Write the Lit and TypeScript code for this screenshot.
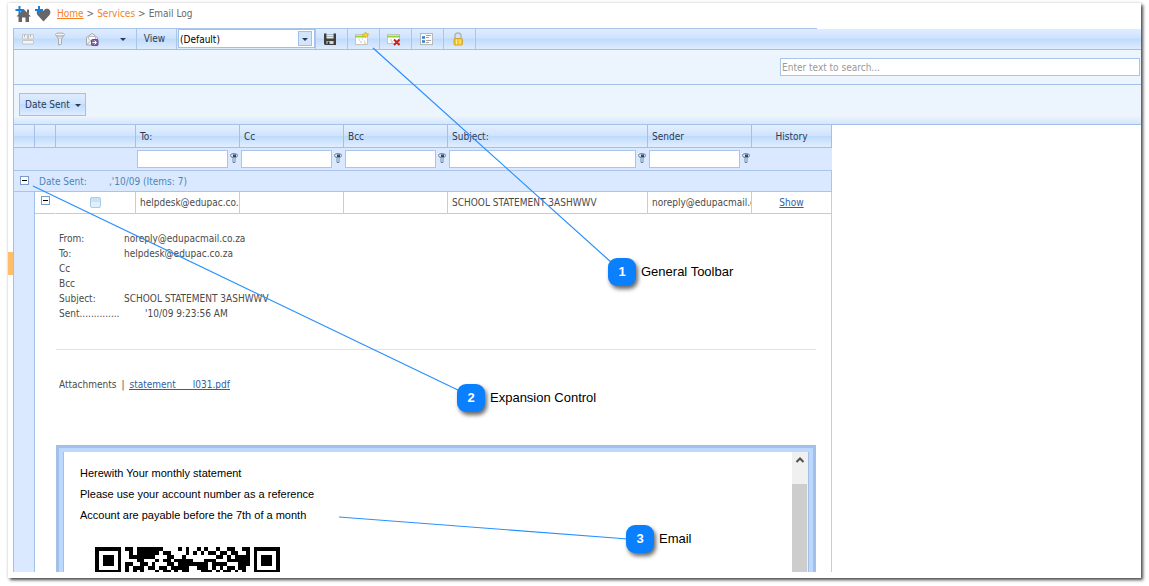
import { LitElement, html, svg, css } from "lit";
import { customElement, property } from "lit/decorators.js";

const glyphs: Record<string, unknown> = {
  home: svg`<path d="M8.500 3 16 10.500H14V16H10.500V11.500H7V16H3.500V10.500H1.500Z" fill="#666"/><path d="M12 3.500H14V8.500L12 6.500Z" fill="#666"/><path d="M4.500 0V8M.5 4H8.500" stroke="#1b7fd6" stroke-width="2"/>`,
  heart: svg`<path d="M8.500 15.500 2.500 9C.5 6 2.500 3 5 3 7 3 8 4 8.500 5 9.500 3 11 2.500 12.500 2.700 15 3 16.500 6 14.500 9Z" fill="#666"/><path d="M4 0V8M0 4H8" stroke="#1b7fd6" stroke-width="2"/>`,
  card: svg`<path d="M2.500 3.500H7.500V8H2.500ZM8.500 3.500H13.500V8H8.500Z" fill="#f1f1f1" stroke="#c4c8cd"/><path d="M4.500 4V6M10.500 4V6" stroke="#b2b7be"/><path d="M2.500 9.500H13.500V13H2.500Z" fill="#f5f5f5" stroke="#c4c8cd"/>`,
  funnel: svg`<path d="M3.500 3.500 6.500 8V14L9.500 13V8L12.500 3.500Z" fill="#d9dbdd" stroke="#a9adb2"/><ellipse cx="8" cy="3.500" rx="4.500" ry="1.500" fill="#f4f4f4" stroke="#a9adb2"/><path d="M8 8V13" stroke="#fff"/>`,
  mail: svg`<path d="M2.500 6.500 8 2.500 13.500 6.500V14H2.500Z" fill="#f3f3f3" stroke="#a5a8ac"/><path d="M4.500 5.500H11.500V8L8 10.500 4.500 8Z" fill="#fff" stroke="#b9bcc0"/><path d="M2.500 14 7 9.500" stroke="#a5a8ac"/><rect x="7.500" y="8.500" width="6.500" height="6" rx="1" fill="#8a5fb2" stroke="#6b4593"/><path d="M8.500 11.500H12M10.500 9.500 12.500 11.500 10.500 13.500" fill="none" stroke="#fff"/>`,
  save: svg`<path d="M2 2.500H14V14H3L2 13Z" fill="#3e3e3e"/><rect x="4.500" y="2" width="7" height="5.500" fill="#e2eef5"/><path d="M5 3.500H11M5 5.500H11" stroke="#a8b9c2"/><rect x="4.500" y="10" width="7" height="3" fill="#d7d7d7"/><rect x="5.500" y="10.500" width="2" height="2.500" fill="#333"/>`,
  add: svg`<rect x="1.500" y="3.500" width="12" height="10" fill="#fff" stroke="#c5c5bf"/><path d="M1 5.500H12" stroke="#8ed43a" stroke-width="2"/><path d="M5 9H6M8 8H9M10 10H11M6 11H8M10 12H12" stroke="#bbb"/><path d="M11.500 1 12.500 2.500 14.500 3 13.500 5 12 6.500 9.500 5.500 8.500 3.500 10.500 2.500Z" fill="#f5cf38" stroke="#d8a51c" stroke-width=".7"/>`,
  remove: svg`<rect x="1.500" y="3.500" width="12" height="9" fill="#fff" stroke="#c5c5bf"/><path d="M1 5.500H14" stroke="#8ed43a" stroke-width="2"/><path d="M4 9H6M5 11H7" stroke="#bbb"/><path d="M8 8.500 13.500 14M13.500 8.500 8 14" stroke="#c61f24" stroke-width="2"/>`,
  form: svg`<rect x="2.500" y="2.500" width="12" height="11" fill="#fafafa" stroke="#b5b8bc"/><path d="M4 6.500H7M4 10.500H7" stroke="#3880c4" stroke-width="2.500"/><path d="M8 4.500H13M8 6.500H11M8 9.500H13M8 11.500H11" stroke="#a5a5a5"/>`,
  lock: svg`<path d="M5 8V5A3 3 0 0 1 11 5V8" fill="none" stroke="#b5b5b0" stroke-width="1.500"/><rect x="4" y="7.500" width="8.500" height="6.500" rx="1" fill="#f1c72d" stroke="#c99b1d" stroke-width=".8"/><path d="M6.500 8.500V13.500M10 8.500V13.500" stroke="#fdeb89"/>`,
  arrow: svg`<path d="M5 7H11L8 10Z" fill="#283b56"/>`,
  pick: svg`<path d="M4.500 4 7 7.500V11.500H9V7.500L11.500 4Z" fill="#eef4fb" stroke="#6c84a6"/><ellipse cx="8" cy="4.500" rx="3.500" ry="2" fill="#dce8f6" stroke="#6c84a6"/><rect x="7" y="3.500" width="3" height="2.500" fill="#2c4b75"/>`,
  up: svg`<path d="M4.500 10 8 6.500 11.500 10" fill="none" stroke="#505050" stroke-width="2"/>`,
};

const icon = (name: string) =>
  html`<svg class="icon" width="16" height="16" viewBox="0 0 16 16" aria-hidden="true">${glyphs[name]}</svg>`;

@customElement("qr-strip")
class QrStrip extends LitElement {
  static styles = css`
    :host { display: block; }
    svg { display: block; }
  `;

  private finder = ["1111111", "1000001", "1011101", "1011101", "1011101", "1000001", "1111111"];

  private body = [
    "110111111100001010010100100110011",
    "010111111011000010101011011011001",
    "011111110001100100000000110101111",
    "000110001011011111000111000111111",
    "110011010001101111111101111000111",
    "101110110110111110011101010110110",
    "101010001011010110001110101101010",
  ];

  render() {
    const rows = this.body.map((bits, i) => `${this.finder[i]}0${bits}0${this.finder[i]}`);
    return html`<svg width="185" height="27" viewBox="0 0 49 7" preserveAspectRatio="none" role="img" aria-label="QR code" shape-rendering="crispEdges">
      ${rows.map((row, y) =>
        [...row.matchAll(/1+/g)].map((run) => svg`<rect x=${run.index} y=${y} width=${run[0].length} height="1"/>`)
      )}
    </svg>`;
  }
}

@customElement("call-out")
class CallOut extends LitElement {
  static styles = css`
    :host {
      position: absolute;
      display: flex;
      align-items: center;
      gap: 5px;
      font: 13px/30px "Liberation Sans", Arial, sans-serif;
      color: #000;
      white-space: nowrap;
    }
    .badge {
      width: 28px;
      height: 28px;
      border-radius: 9px;
      background: #0a80ff;
      color: #fff;
      font-weight: bold;
      line-height: 28px;
      text-align: center;
      box-shadow: 2px 3px 4px rgba(0, 0, 0, 0.6);
    }
  `;

  @property() number = "";
  @property() label = "";

  render() {
    return html`<span class="badge">${this.number}</span><span>${this.label}</span>`;
  }
}

@customElement("app-root")
class AppRoot extends LitElement {
  static styles = css`
    :host {
      display: block;
      position: relative;
      box-sizing: border-box;
      height: 100vh;
      padding: 3px 8px 8px;
      overflow: hidden;
      background: #fff;
      font: 10px/15px "DejaVu Sans Condensed", Tahoma, sans-serif;
      color: #4a4a4a;
    }
    * { box-sizing: border-box; }
    .icon { display: block; flex: none; }
    button, input, select { font: inherit; color: inherit; margin: 0; border-radius: 0; }
    .sheet {
      height: 100%;
      padding: 0 0 6px 5px;
      background: #fff;
      box-shadow: 2px 2px 3px rgba(0, 0, 0, 0.7), 0 0 3px rgba(0, 0, 0, 0.15);
      position: relative;
    }
    .marker {
      position: absolute;
      left: 0;
      top: 249px;
      width: 5px;
      height: 23px;
      background: #ffbe6a;
    }
    .page { height: 100%; overflow: hidden; }
    .crumbs {
      display: flex;
      align-items: center;
      gap: 4px;
      height: 26px;
      max-width: 804px;
      padding: 0 0 4px 2px;
      border-bottom: 1px solid #a9c5ec;
      color: #6a6a6a;
    }
    .crumbs a { color: #f5821f; text-decoration: none; }
    .crumbs a.home { text-decoration: underline; }
    .trail { display: flex; gap: 3px; margin-left: 2px; }
    .toolbar {
      display: flex;
      height: 21px;
      border-left: 1px solid #a3c0e8;
      border-bottom: 1px solid #a3c0e8;
      background: linear-gradient(#dfecff 0, #cfe3fd 45%, #bfdbfb 50%, #dfecff 100%);
      color: #283b56;
    }
    .toolbar button {
      display: flex;
      align-items: center;
      justify-content: center;
      width: 32px;
      padding: 0 4px 0 0;
      border: 0;
      border-right: 1px solid #a9c5ec;
      background: none;
    }
    .toolbar .plain { border: 0; }
    .toolbar .drop { width: 27px; padding: 0; border-right: 1px solid #a9c5ec; }
    .toolbar label {
      width: 40px;
      line-height: 20px;
      text-align: center;
      border-right: 1px solid #a9c5ec;
      padding-right: 4px;
    }
    .combo {
      position: relative;
      width: 139px;
      padding: 0 1px;
      border-right: 1px solid #a9c5ec;
    }
    .combo select {
      display: block;
      width: 137px;
      height: 19px;
      padding: 2px 1px 0;
      border: 1px solid #a3c0e8;
      background: #fff;
      appearance: none;
      color: #000;
    }
    .knob {
      position: absolute;
      right: 3px;
      top: 2px;
      display: flex;
      align-items: center;
      justify-content: center;
      width: 14px;
      height: 15px;
      border: 1px solid #a3c0e8;
      background: #d3e5fc;
      pointer-events: none;
    }
    .search {
      display: flex;
      justify-content: flex-end;
      height: 35px;
      padding: 8px 1px 8px 8px;
      border-left: 1px solid #a3c0e8;
      border-bottom: 1px solid #a3c0e8;
      background: #ecf4fe;
    }
    .search input {
      flex: 0 1 360px;
      min-width: 0;
      padding: 0 1px;
      border: 1px solid #a9c5ec;
      background: #fff;
    }
    .search input::placeholder { color: #999; opacity: 1; }
    .grouping {
      height: 40px;
      padding: 8px 5px;
      border-left: 1px solid #a3c0e8;
      border-bottom: 1px solid #a3c0e8;
      background: linear-gradient(#ecf4fe 0, #ecf4fe 80%, #d5e6fa 100%);
    }
    .grouping button {
      display: flex;
      align-items: center;
      justify-content: space-between;
      width: 67px;
      height: 23px;
      padding: 0 0 0 5px;
      border: 1px solid #a3c0e8;
      background: linear-gradient(#dfecff 0, #cfe3fd 45%, #bfdbfb 50%, #dfecff 100%);
      color: #283b56;
      white-space: nowrap;
    }
    table {
      width: 819px;
      table-layout: fixed;
      border-collapse: separate;
      border-spacing: 0;
      border-left: 1px solid #a3c0e8;
    }
    th, td { padding: 0; text-align: left; font-weight: normal; overflow: hidden; white-space: nowrap; }
    .c21 { width: 21px; }
    .c80 { width: 80px; }
    .c104 { width: 104px; }
    .c200 { width: 200px; }
    th {
      height: 23px;
      padding: 0 4px;
      border-right: 1px solid #a3c0e8;
      border-bottom: 1px solid #a3c0e8;
      background: linear-gradient(#e5f0ff 0, #cfe3fd 48%, #bfdbfb 52%, #e1eeff 100%);
      color: #283b56;
    }
    .center { text-align: center; }
    .filters td { height: 23px; background: #dae9ff; border-bottom: 1px solid #a9c5ec; }
    .filter { display: flex; align-items: center; padding-left: 1px; }
    .filter input {
      flex: 1;
      min-width: 0;
      height: 18px;
      padding: 0 2px;
      border: 1px solid #a9c5ec;
      background: #fff;
    }
    .filter button {
      display: flex;
      align-items: center;
      justify-content: center;
      width: 12px;
      height: 16px;
      padding: 0;
      border: 0;
      background: none;
    }
    .group td { height: 21px; background: #dae9ff; border-bottom: 1px solid #a9c5ec; border-right: 1px solid #a9c5ec; color: #4a86b8; }
    .group .line { display: flex; align-items: center; }
    .toggle {
      flex: none;
      display: block;
      width: 9px;
      height: 9px;
      padding: 3px 1px;
      border: 1px solid #7a9cc8;
      background: #fff;
    }
    .toggle::before { content: ""; display: block; height: 1px; background: #000; }
    .group .toggle { margin: 0 10px 2px 6px; }
    .group .title { width: 70px; }
    .row td { height: 22px; padding: 0 0 0 4px; border-right: 1px solid #b9d0f0; border-bottom: 1px solid #b5cdee; }
    .row td.rail, .detail td.rail { background: #dae9ff; border-bottom: 0; border-right: 1px solid #a3c0e8; padding: 0; }
    .row td.bare { border-right-color: transparent; padding: 0 0 4px 6px; }
    .row td.tick { padding: 0 0 0 34px; }
    .row td.center { padding: 0; }
    .row input {
      appearance: none;
      display: block;
      width: 11px;
      height: 11px;
      border: 1px solid #a7cbea;
      border-radius: 2px;
      background: linear-gradient(#c9e2f6 50%, #e0effb 50%);
    }
    a { color: #2f5fa5; }
    .detail td { border-right: 1px solid #b9d0f0; vertical-align: top; padding: 17px 15px 0 21px; }
    dl {
      display: grid;
      grid-template-columns: 65px 1fr;
      grid-auto-rows: 15px;
      margin: 0 3px;
    }
    dd { margin: 0; }
    .sent { padding-left: 21px; }
    .rule { margin: 28px 0 0; border: 0; border-top: 1px solid #e2e2e2; }
    .files { display: flex; gap: 5px; margin: 27px 3px 53px; }
    .files a { display: flex; gap: 17px; height: 13px; text-decoration: none; border-bottom: 1px solid #2f5fa5; }
    .mail {
      display: flex;
      justify-content: space-between;
      height: 300px;
      border: 3px solid #a3c0e8;
      outline: 4px solid #bcd8ff;
      outline-offset: -7px;
      padding: 3px 4px 0;
    }
    .letter {
      flex: 1;
      padding: 8px 16px;
      border: 1px solid #a3c0e8;
      border-right: 0;
      font: 11px/15px "Liberation Sans", Arial, sans-serif;
      color: #000;
    }
    .letter p { margin: 6px 0; }
    .letter qr-strip { margin: 24px 0 0 15px; }
    .scroll { width: 17px; border: 1px solid #a3c0e8; border-left: 0; background: #f0f0f0; }
    .scroll .thumb { width: 15px; height: 250px; margin-top: 16px; background: #cdcdcd; }
    .wires { position: absolute; left: 0; top: 0; pointer-events: none; }
    .one { left: 608px; top: 257px; }
    .two { left: 457px; top: 383px; }
    .three { left: 626px; top: 524px; }
  `;

  private filterCell(name: string) {
    return html`<td><div class="filter"><input aria-label="Filter ${name}" /><button aria-label="${name} filter options">${icon("pick")}</button></div></td>`;
  }

  render() {
    return html`
      <main class="sheet">
        <span class="marker"></span>
        <div class="page">
          <nav class="crumbs">
            <a href="#" aria-label="Set as home">${icon("home")}</a>
            <a href="#" aria-label="Add to favourites">${icon("heart")}</a>
            <div class="trail">
              <a class="home" href="#">Home</a><span>&gt;</span><a href="#">Services</a><span>&gt;</span><span>Email Log</span>
            </div>
          </nav>
          <div class="toolbar">
            <button class="plain" aria-label="Card view">${icon("card")}</button>
            <button class="plain" aria-label="Filter">${icon("funnel")}</button>
            <button class="plain" aria-label="Send">${icon("mail")}</button>
            <button class="drop" aria-label="More">${icon("arrow")}</button>
            <label for="view">View</label>
            <div class="combo">
              <select id="view"><option>(Default)</option></select>
              <span class="knob">${icon("arrow")}</span>
            </div>
            ${["save", "add", "remove", "form", "lock"].map((n) => html`<button aria-label=${n}>${icon(n)}</button>`)}
          </div>
          <div class="search"><input aria-label="Search" placeholder="Enter text to search..." /></div>
          <div class="grouping"><button>Date Sent ${icon("arrow")}</button></div>
          <table>
            <colgroup>
              <col class="c21" /><col class="c21" /><col class="c80" /><col class="c104" /><col class="c104" />
              <col class="c104" /><col class="c200" /><col class="c104" /><col class="c80" />
            </colgroup>
            <thead>
              <tr><th></th><th></th><th></th><th>To:</th><th>Cc</th><th>Bcc</th><th>Subject:</th><th>Sender</th><th class="center">History</th></tr>
            </thead>
            <tbody>
              <tr class="filters">
                <td></td><td></td><td></td>
                ${["To", "Cc", "Bcc", "Subject", "Sender"].map((n) => this.filterCell(n))}
                <td></td>
              </tr>
              <tr class="group">
                <td colspan="9"><div class="line"><button class="toggle" aria-label="Collapse group"></button><span class="title">Date Sent:</span><span>,'10/09 (Items: 7)</span></div></td>
              </tr>
              <tr class="row">
                <td class="rail"></td>
                <td class="bare"><button class="toggle" aria-label="Collapse row"></button></td>
                <td class="tick"><input type="checkbox" aria-label="Select row" /></td>
                <td>helpdesk@edupac.co.za</td><td></td><td></td>
                <td>SCHOOL STATEMENT 3ASHWWV</td><td>noreply@edupacmail.co.za</td>
                <td class="center"><a href="#">Show</a></td>
              </tr>
              <tr class="detail">
                <td class="rail"></td>
                <td colspan="8">
                  <dl>
                    <dt>From:</dt><dd>noreply@edupacmail.co.za</dd>
                    <dt>To:</dt><dd>helpdesk@edupac.co.za</dd>
                    <dt>Cc</dt><dd></dd>
                    <dt>Bcc</dt><dd></dd>
                    <dt>Subject:</dt><dd>SCHOOL STATEMENT 3ASHWWV</dd>
                    <dt>Sent..............</dt><dd class="sent">'10/09 9:23:56 AM</dd>
                  </dl>
                  <hr class="rule" />
                  <div class="files"><span>Attachments</span><span>|</span><a href="#"><span>statement</span><span>l031.pdf</span></a></div>
                  <div class="mail">
                    <div class="letter">
                      <p>Herewith Your monthly statement</p>
                      <p>Please use your account number as a reference</p>
                      <p>Account are payable before the 7th of a month</p>
                      <qr-strip></qr-strip>
                    </div>
                    <div class="scroll">${icon("up")}<div class="thumb"></div></div>
                  </div>
                </td>
              </tr>
            </tbody>
          </table>
        </div>
      </main>
      <svg class="wires" width="1149" height="586" aria-hidden="true">
        <path d="M373 48 612 263M33 186 460 391M339 517 628 539" fill="none" stroke="#2a90ff" stroke-width="1.200" />
      </svg>
      <call-out class="one" number="1" label="General Toolbar"></call-out>
      <call-out class="two" number="2" label="Expansion Control"></call-out>
      <call-out class="three" number="3" label="Email"></call-out>
    `;
  }
}
